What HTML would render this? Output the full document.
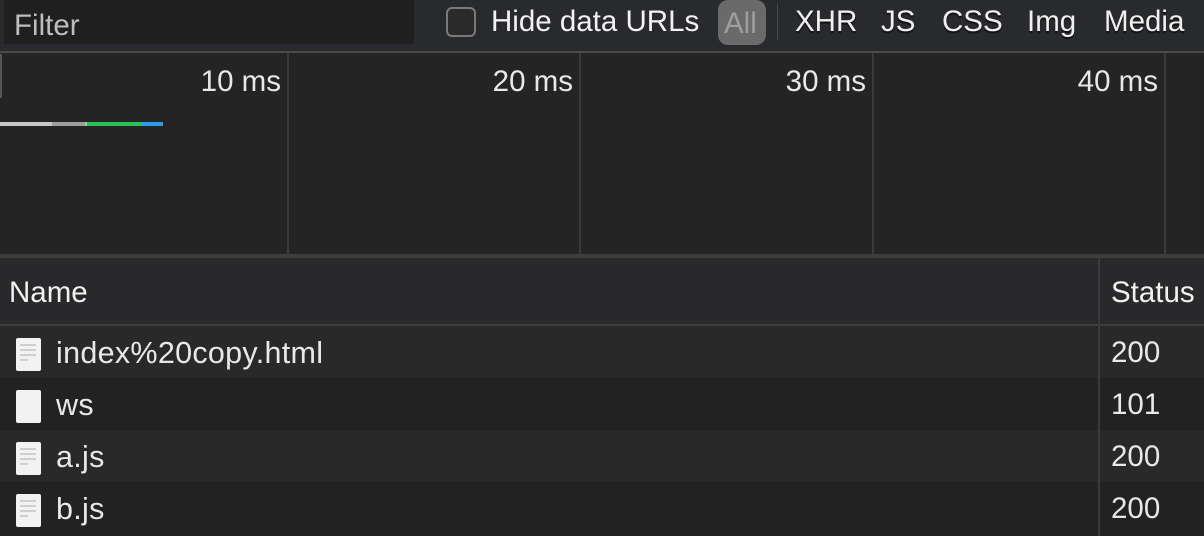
<!DOCTYPE html>
<html><head><style>
*{margin:0;padding:0;box-sizing:border-box}
body{width:1204px;height:536px;background:#242424;font-family:"Liberation Sans",Arial,sans-serif;color:#e8e8e8;position:relative;overflow:hidden}
.a{position:absolute}
.t{font-size:29.5px;white-space:nowrap;line-height:34px}
.r{font-size:30.5px;letter-spacing:0.3px}
.tb{text-shadow:0 2px 1px rgba(0,0,0,.6);color:#f0f0f0}
.ic{position:absolute;left:16px;width:25px;height:33px;background:#f2f2f2;border-radius:2px}
.ic i{position:absolute;left:4px;height:2px;background:#cfcfcf}
</style></head><body>
<div class="a" style="left:0;top:0;width:1204px;height:52px;background:#292a2d"></div>
<div class="a" style="left:4px;top:0;width:410px;height:44px;background:#1f1f1f"></div>
<div class="a t" style="left:14px;top:9px;color:#bdbdbd">Filter</div>
<div class="a" style="left:446px;top:7px;width:30px;height:30px;border:2px solid #7a7a7a;border-radius:6px;background:#2a2a2a"></div>
<div class="a t" style="left:491px;top:5px;color:#f2f2f2">Hide data URLs</div>
<div class="a" style="left:718px;top:0;width:48px;height:45px;background:#6a6a6a;border-radius:10px"></div>
<div class="a t" style="left:724px;top:7px;color:#9e9e9e">All</div>
<div class="a" style="left:777px;top:4px;width:1px;height:36px;background:#4a4a4a"></div>
<div class="a t tb" style="left:795px;top:5px">XHR</div>
<div class="a t tb" style="left:881px;top:5px">JS</div>
<div class="a t tb" style="left:942px;top:5px">CSS</div>
<div class="a t tb" style="left:1027px;top:5px">Img</div>
<div class="a t tb" style="left:1104px;top:5px">Media</div>
<div class="a" style="left:0;top:51px;width:1204px;height:2px;background:#4a4a4a"></div>
<div class="a" style="left:0;top:54px;width:2px;height:44px;background:#555"></div>
<div class="a" style="left:287px;top:53px;width:2px;height:201px;background:#3a3a3a"></div>
<div class="a" style="left:579px;top:53px;width:2px;height:201px;background:#3a3a3a"></div>
<div class="a" style="left:872px;top:53px;width:2px;height:201px;background:#3a3a3a"></div>
<div class="a" style="left:1164px;top:53px;width:2px;height:201px;background:#3a3a3a"></div>
<div class="a t" style="right:923px;top:65px">10 ms</div>
<div class="a t" style="right:631px;top:65px">20 ms</div>
<div class="a t" style="right:338px;top:65px">30 ms</div>
<div class="a t" style="right:46px;top:65px">40 ms</div>
<div class="a" style="left:0;top:122px;width:52px;height:4px;background:#c8c8c8"></div>
<div class="a" style="left:52px;top:122px;width:33px;height:4px;background:#9e9e9e"></div>
<div class="a" style="left:85px;top:122px;width:2px;height:4px;background:#bbb"></div>
<div class="a" style="left:87px;top:122px;width:55px;height:4px;background:#2bbf55"></div>
<div class="a" style="left:142px;top:122px;width:21px;height:4px;background:#2a9cee"></div>
<div class="a" style="left:0;top:254px;width:1204px;height:4px;background:#3d3d3d"></div>
<div class="a" style="left:0;top:258px;width:1204px;height:66px;background:#29292c"></div>
<div class="a t" style="left:9px;top:276px;color:#f2f2f2">Name</div>
<div class="a t" style="left:1111px;top:276px;color:#f2f2f2">Status</div>
<div class="a" style="left:0;top:324px;width:1204px;height:2px;background:#3d3d3d"></div>
<div class="a" style="left:0;top:326px;width:1204px;height:52px;background:#292929"></div>
<div class="a" style="left:0;top:378px;width:1204px;height:52px;background:#222"></div>
<div class="a" style="left:0;top:430px;width:1204px;height:52px;background:#292929"></div>
<div class="a" style="left:0;top:482px;width:1204px;height:54px;background:#222"></div>
<div class="a" style="left:1098px;top:258px;width:2px;height:278px;background:#3a3a3a"></div>

<div class="ic" style="top:338px"><i style="top:6px;width:16px"></i><i style="top:11px;width:16px"></i><i style="top:16px;width:16px"></i><i style="top:21px;width:8px"></i></div>
<div class="a t r" style="left:56px;top:336px">index%20copy.html</div>
<div class="a t" style="left:1111px;top:336px">200</div>
<div class="ic" style="top:390px"></div>
<div class="a t r" style="left:56px;top:388px">ws</div>
<div class="a t" style="left:1111px;top:388px">101</div>
<div class="ic" style="top:442px"><i style="top:6px;width:16px"></i><i style="top:11px;width:16px"></i><i style="top:16px;width:16px"></i><i style="top:21px;width:8px"></i></div>
<div class="a t r" style="left:56px;top:440px">a.js</div>
<div class="a t" style="left:1111px;top:440px">200</div>
<div class="ic" style="top:494px"><i style="top:6px;width:16px"></i><i style="top:11px;width:16px"></i><i style="top:16px;width:16px"></i><i style="top:21px;width:8px"></i></div>
<div class="a t r" style="left:56px;top:492px">b.js</div>
<div class="a t" style="left:1111px;top:492px">200</div>
</body></html>
